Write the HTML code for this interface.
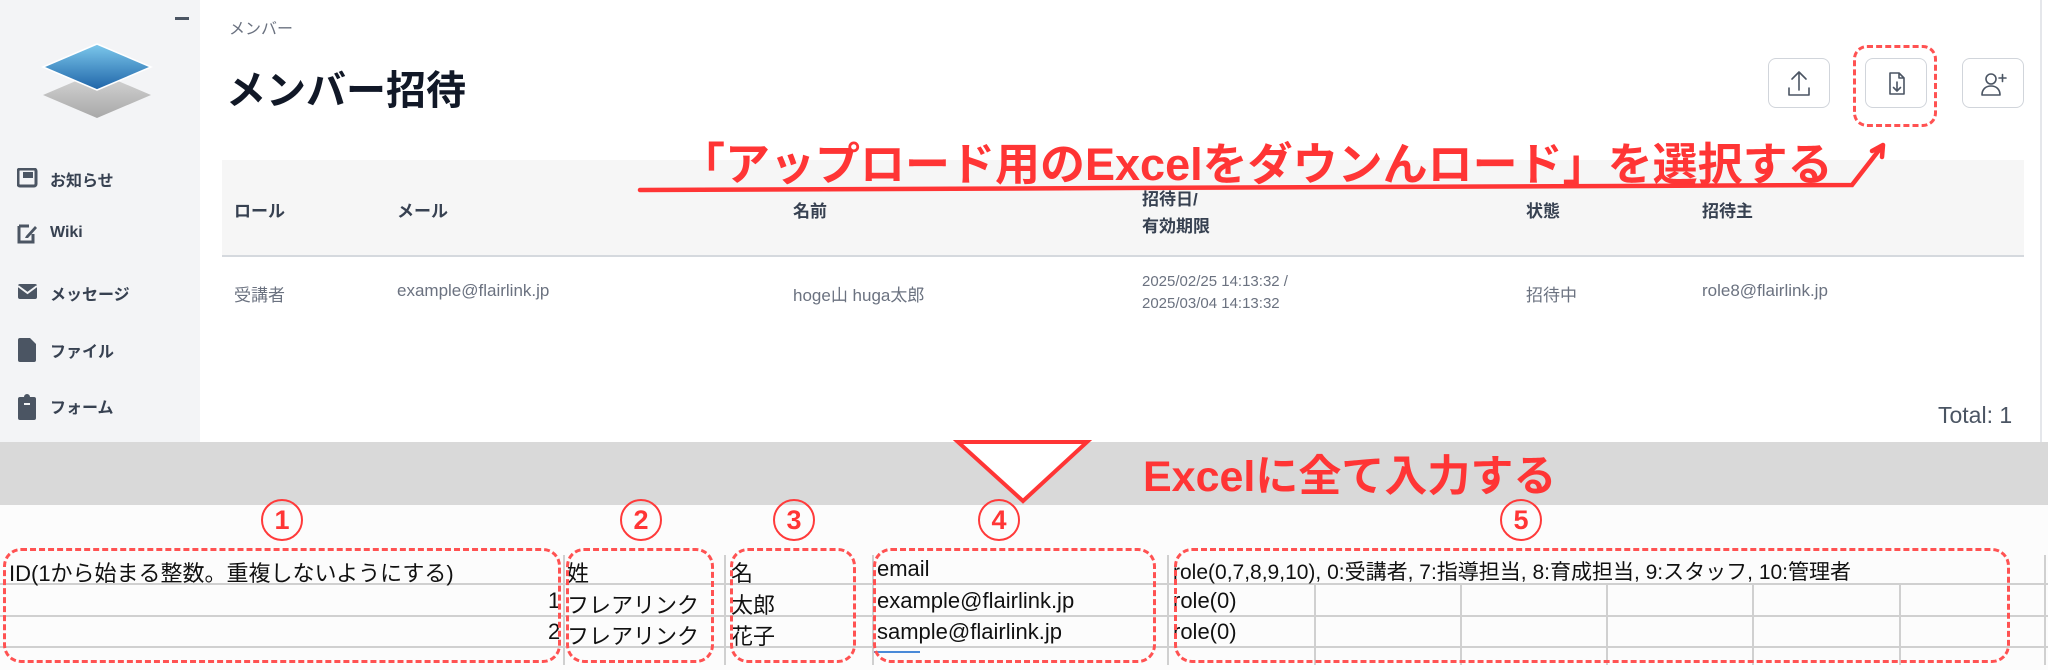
<!DOCTYPE html>
<html><head><meta charset="utf-8"><style>
*{margin:0;padding:0;box-sizing:border-box}
body{width:2048px;height:670px;overflow:hidden;background:#fff;font-family:"Liberation Sans","Noto Sans CJK JP",sans-serif;position:relative}
.a{position:absolute;white-space:nowrap}
.side{left:0;top:0;width:200px;height:442px;background:#f3f4f6}
.nav{left:50px;font-size:16px;font-weight:bold;color:#374151}
.th{font-size:17px;font-weight:bold;color:#374151}
.td{font-size:17px;color:#6b7280}
.btn{width:62px;height:50px;border:1.5px solid #d1d5db;border-radius:8px;background:#fff}
.red{color:#ff3535;font-weight:bold}
.box{border:3.5px dashed #ff5252;border-radius:18px}
.circ{width:42px;height:42px;border:2px solid #ff3a3a;border-radius:50%;color:#ff3535;font-weight:bold;font-size:27px;text-align:center;line-height:38px}
.xl{font-size:22px;color:#111;font-family:"Liberation Sans","Noto Sans CJK JP",sans-serif}
.hl{height:2px;background:#d0d0d0}
.vl{width:1.5px;background:#d0d0d0}
</style></head><body>
<div class="a side"></div>
<div class="a" style="left:175px;top:17px;width:14px;height:2.5px;background:#4b5563"></div>
<svg class="a" style="left:0;top:0" width="200" height="130">
<defs><linearGradient id="b" x1="0" y1="0" x2="0" y2="1"><stop offset="0" stop-color="#7cc8ec"/><stop offset="1" stop-color="#1f64a8"/></linearGradient>
<linearGradient id="g" x1="0" y1="0" x2="0" y2="1"><stop offset="0" stop-color="#d8d8d8"/><stop offset="1" stop-color="#a8a8a8"/></linearGradient></defs>
<polygon points="97,72 151,95 97,118 43,95" fill="url(#g)"/>
<polygon points="97,44 151,67 97,90 43,67" fill="url(#b)" stroke="#fff" stroke-width="1.5"/>
</svg>
<svg class="a" style="left:17px;top:168px" width="22" height="260" fill="#4b5563">
<rect x="1" y="1" width="18" height="17" rx="2" fill="none" stroke="#4b5563" stroke-width="3"/><rect x="6" y="4" width="10" height="6"/>
<path d="M2 58h10M2 58v16h14v-8" fill="none" stroke="#4b5563" stroke-width="3"/><path d="M9 68l9-10 2 2-9 10h-3z"/>
<rect x="1" y="116" width="19" height="15" rx="2"/><path d="M1 118l9.5 7 9.5-7" stroke="#f3f4f6" stroke-width="2" fill="none"/>
<path d="M3 170h10l6 6v16a2 2 0 0 1-2 2H3a2 2 0 0 1-2-2V172a2 2 0 0 1 2-2z"/>
<path d="M3 229h4a3 3 0 0 1 6 0h4a2 2 0 0 1 2 2v19a2 2 0 0 1-2 2H3a2 2 0 0 1-2-2V231a2 2 0 0 1 2-2z"/><rect x="7" y="235" width="6" height="2" fill="#f3f4f6"/>
</svg>
<div class="a nav" style="top:167px">お知らせ</div>
<div class="a nav" style="top:224px">Wiki</div>
<div class="a nav" style="top:281px">メッセージ</div>
<div class="a nav" style="top:338px">ファイル</div>
<div class="a nav" style="top:394px">フォーム</div>
<div class="a" style="left:2040px;top:0;width:2px;height:442px;background:#e5e7eb"></div>

<div class="a" style="left:229px;top:15px;font-size:16px;color:#6b7280">メンバー</div>
<div class="a" style="left:226px;top:58px;font-size:40px;font-weight:bold;color:#111827">メンバー招待</div>

<div class="a btn" style="left:1768px;top:58px"></div>
<div class="a btn" style="left:1865px;top:58px"></div>
<div class="a btn" style="left:1962px;top:58px"></div>
<svg class="a" style="left:1768px;top:58px" width="260" height="50" fill="none" stroke="#4b5563" stroke-width="1.6" stroke-linecap="round" stroke-linejoin="round">
<path d="M31 15v17M24 21l7-7 7 7M21 30v7h20v-7"/>
<path d="M122 15h9l5 5v16h-14zM131 15v5h5M129 24v9M125.5 29.5l3.5 3.5 3.5-3.5"/>
<circle cx="223" cy="21" r="5"/><path d="M214 37c0-6 4-9 9-9s9 3 9 9zM231 20h7M234.5 16.5v7"/>
</svg>
<div class="a box" style="left:1853px;top:45px;width:84px;height:82px;border-radius:14px"></div>

<div class="a" style="left:222px;top:160px;width:1802px;height:97px;background:#f6f6f6;border-bottom:2px solid #d5d9de"></div>
<div class="a th" style="left:234px;top:197px">ロール</div>
<div class="a th" style="left:397px;top:197px">メール</div>
<div class="a th" style="left:793px;top:197px">名前</div>
<div class="a th" style="left:1142px;top:186px;line-height:27px">招待日/<br>有効期限</div>
<div class="a th" style="left:1526px;top:197px">状態</div>
<div class="a th" style="left:1702px;top:197px">招待主</div>
<div class="a td" style="left:234px;top:281px">受講者</div>
<div class="a td" style="left:397px;top:281px">example@flairlink.jp</div>
<div class="a td" style="left:793px;top:281px">hoge山 huga太郎</div>
<div class="a td" style="left:1142px;top:271px;font-size:15px;line-height:22px">2025/02/25 14:13:32 /<br>2025/03/04 14:13:32</div>
<div class="a td" style="left:1526px;top:281px">招待中</div>
<div class="a td" style="left:1702px;top:281px">role8@flairlink.jp</div>
<div class="a" style="left:1938px;top:402px;font-size:23px;color:#4b5563">Total: 1</div>

<div class="a red" style="left:680px;top:128px;font-size:45px">「アップロード用のExcelをダウンんロード」を選択する</div>
<svg class="a" style="left:630px;top:135px" width="1270" height="65"><path d="M10 55L1222 50L1253 10M1253 10l-11 6M1253 10l-1 12" fill="none" stroke="#ff3535" stroke-width="4.5" stroke-linecap="round"/></svg>

<div class="a" style="left:0;top:442px;width:2048px;height:63px;background:#d9d9d9"></div>
<div class="a" style="left:0;top:505px;width:2048px;height:165px;background:#fcfcfc"></div>
<svg class="a" style="left:950px;top:438px" width="150" height="70"><polygon points="8,4 137,4 73,63" fill="#fff" stroke="#ff3535" stroke-width="4"/></svg>
<div class="a red" style="left:1143px;top:442px;font-size:43px">Excelに全て入力する</div>

<div class="a hl" style="left:0;top:583px;width:2048px"></div>
<div class="a hl" style="left:0;top:615px;width:2048px"></div>
<div class="a hl" style="left:0;top:646px;width:2048px"></div>
<div class="a vl" style="left:563px;top:555px;height:110px"></div>
<div class="a vl" style="left:724px;top:555px;height:110px"></div>
<div class="a vl" style="left:872px;top:555px;height:110px"></div>
<div class="a vl" style="left:1167px;top:555px;height:110px"></div>
<div class="a vl" style="left:1314px;top:585px;height:80px"></div>
<div class="a vl" style="left:1460px;top:585px;height:80px"></div>
<div class="a vl" style="left:1606px;top:585px;height:80px"></div>
<div class="a vl" style="left:1752px;top:585px;height:80px"></div>
<div class="a vl" style="left:1899px;top:585px;height:80px"></div>
<div class="a vl" style="left:2044px;top:555px;height:110px"></div>
<div class="a" style="left:874px;top:651px;width:46px;height:2px;background:#4a8ad8"></div>

<div class="a xl" style="left:9px;top:556px">ID(1から始まる整数。重複しないようにする)</div>
<div class="a xl" style="left:548px;top:588px">1</div>
<div class="a xl" style="left:548px;top:619px">2</div>
<div class="a xl" style="left:567px;top:556px">姓</div>
<div class="a xl" style="left:567px;top:588px">フレアリンク</div>
<div class="a xl" style="left:567px;top:619px">フレアリンク</div>
<div class="a xl" style="left:731px;top:556px">名</div>
<div class="a xl" style="left:731px;top:588px">太郎</div>
<div class="a xl" style="left:731px;top:619px">花子</div>
<div class="a xl" style="left:877px;top:556px">email</div>
<div class="a xl" style="left:877px;top:588px">example@flairlink.jp</div>
<div class="a xl" style="left:877px;top:619px">sample@flairlink.jp</div>
<div class="a xl" style="left:1173px;top:556px;font-size:21px">role(0,7,8,9,10), 0:受講者, 7:指導担当, 8:育成担当, 9:スタッフ, 10:管理者</div>
<div class="a xl" style="left:1173px;top:588px">role(0)</div>
<div class="a xl" style="left:1173px;top:619px">role(0)</div>

<div class="a box" style="left:3px;top:548px;width:558px;height:115px"></div>
<div class="a box" style="left:566px;top:548px;width:148px;height:115px"></div>
<div class="a box" style="left:730px;top:548px;width:126px;height:115px"></div>
<div class="a box" style="left:873px;top:548px;width:283px;height:115px"></div>
<div class="a box" style="left:1174px;top:548px;width:836px;height:115px"></div>
<div class="a circ" style="left:261px;top:499px">1</div>
<div class="a circ" style="left:620px;top:499px">2</div>
<div class="a circ" style="left:773px;top:499px">3</div>
<div class="a circ" style="left:978px;top:499px">4</div>
<div class="a circ" style="left:1500px;top:499px">5</div>
</body></html>
